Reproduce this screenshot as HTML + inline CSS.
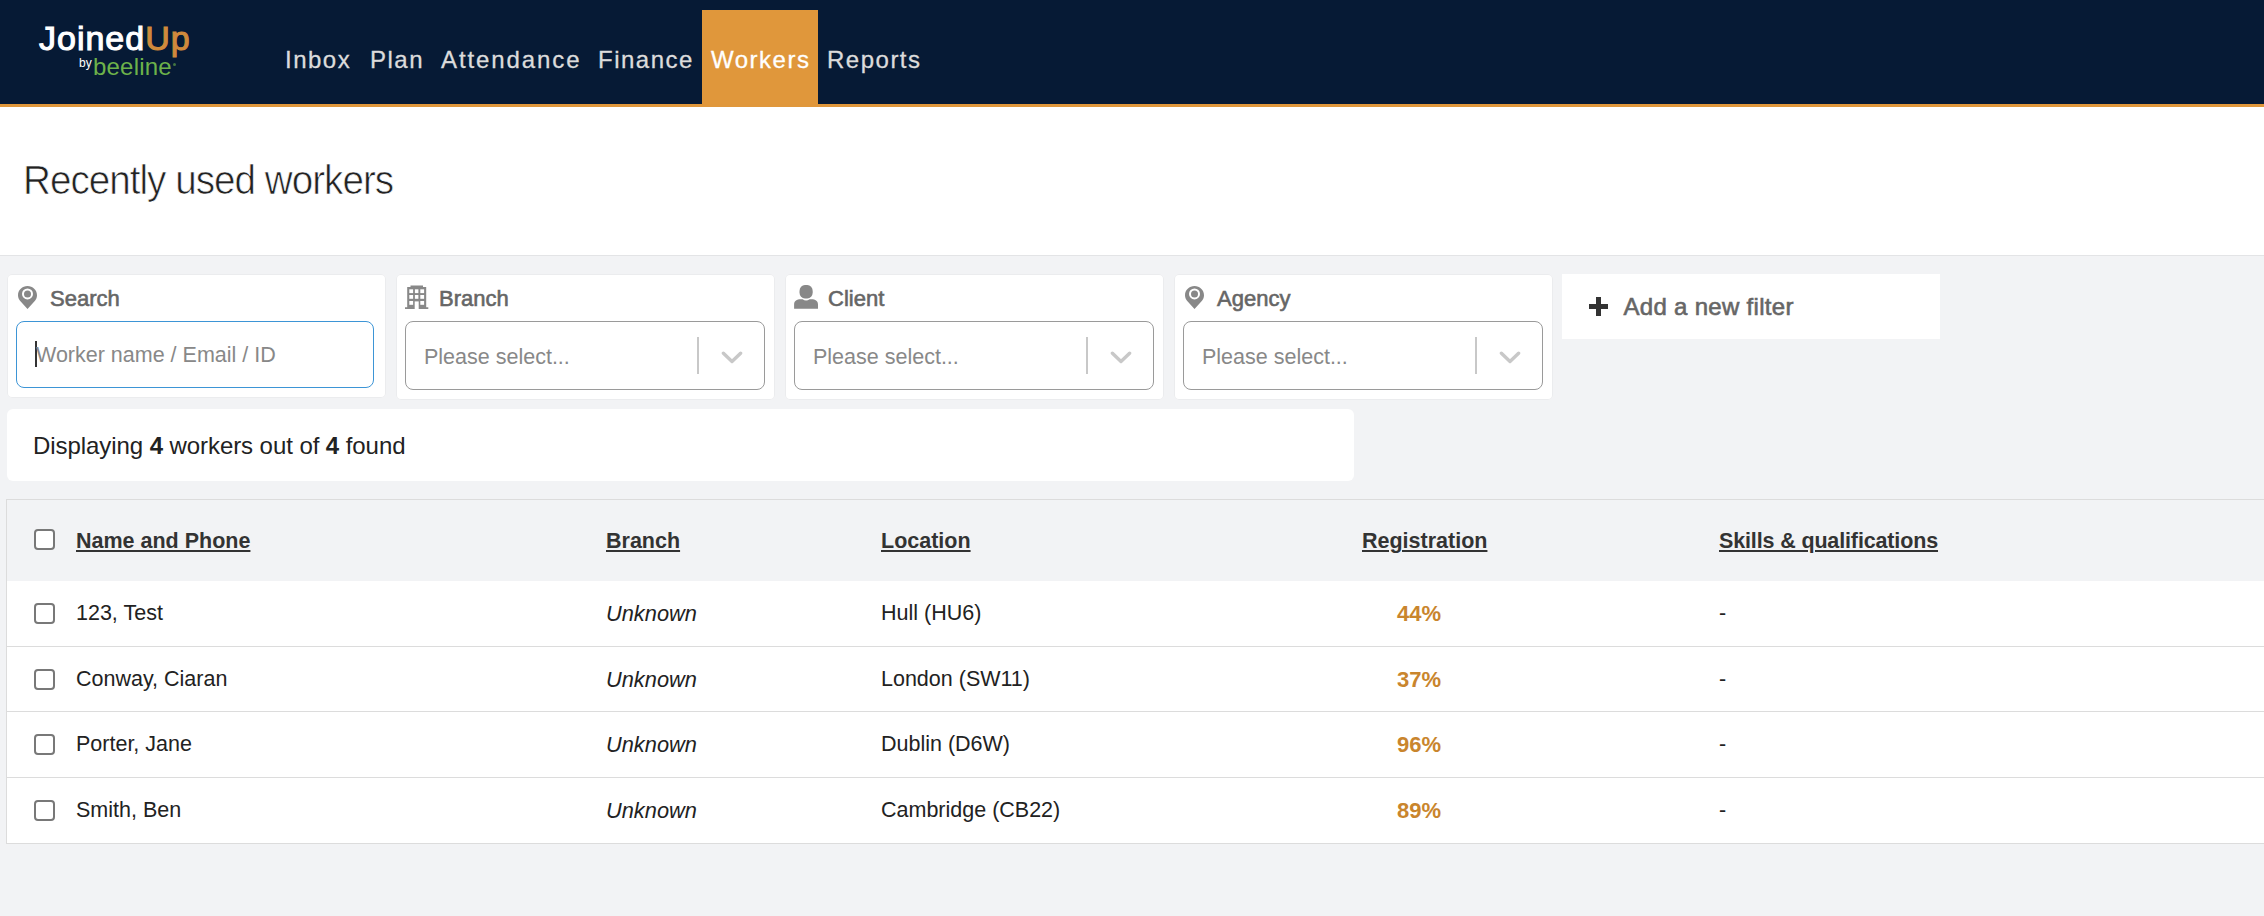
<!DOCTYPE html>
<html><head><meta charset="utf-8">
<style>
*{box-sizing:border-box;margin:0;padding:0}
html,body{width:2264px;height:916px;overflow:hidden;background:#f2f3f5;font-family:"Liberation Sans",sans-serif;}
.hdr{position:absolute;left:0;top:0;width:2264px;height:107px;background:#061a35;border-bottom:3px solid #e0973b}
.logo{position:absolute;left:38px;top:0}
.nav{position:absolute;top:10px;height:94px;font-size:24px;letter-spacing:1.5px;color:#dcdcdc;-webkit-text-stroke:0.3px #dcdcdc}
.nav span{position:absolute;top:0;height:94px;line-height:100px;white-space:nowrap}
.nav .act{background:#e0973b;color:#fff;-webkit-text-stroke:0.3px #fff}
.titlebar{position:absolute;left:0;top:107px;width:2264px;height:149px;background:#fff;border-bottom:1px solid #e3e4e6}
.title{position:absolute;left:22.5px;top:158px;font-size:40px;color:#222;white-space:nowrap;transform:scaleX(0.965);transform-origin:0 0;letter-spacing:-1px;-webkit-text-stroke:0.7px #fff}
.card{position:absolute;top:274px;height:124px;width:379px;background:#fff;border-radius:5px;box-shadow:inset 0 0 0 1px #ebecee}
.lbl{position:absolute;left:43px;top:12px;font-size:22px;color:#666;white-space:nowrap;-webkit-text-stroke:0.6px #666}
.ico{position:absolute;left:11px;top:11px}
.inp{position:absolute;left:9px;top:47px;width:358px;height:67px;border:1.5px solid #9a9a9a;border-radius:8px;background:#fff}
.inp.focus{border-color:#3d95d6}
.sc{height:125.5px}
.sc .inp{width:360px;height:68.5px;top:47px}
.sc .ph{left:18px;top:23px}
.ph{position:absolute;left:19px;top:21px;font-size:21.5px;color:#888;white-space:nowrap}
.sep{position:absolute;left:290.5px;top:14.5px;width:2px;height:37px;background:#c8c8c8}
.chev{position:absolute;left:317px;top:27px}
.addf{position:absolute;left:1562px;top:274px;width:378px;height:65px;background:#fff}
.info{position:absolute;left:7px;top:409px;width:1347px;height:72px;background:#fff;border-radius:6px}
.info p{position:absolute;left:26px;top:22.5px;font-size:24px;letter-spacing:-0.07px;color:#222;white-space:nowrap}
.tbl{position:absolute;left:6px;top:499px;width:2270px;height:345px;border:1px solid #dcdcdc;border-bottom:0;background:#fff}
.th{position:absolute;left:0;top:0;width:100%;height:81px;background:#f2f3f5}
.row{position:absolute;left:0;width:100%;height:66px;border-bottom:1px solid #dcdcdc}
.cb{position:absolute;left:27px;width:21px;height:21px;border:2px solid #787878;border-radius:4px;background:#fff}
.cell{position:absolute;font-size:21.5px;color:#222;white-space:nowrap}
.h{font-weight:bold;color:#333;text-decoration:underline;text-underline-offset:1.5px;text-decoration-thickness:2px}
.it{font-style:italic;font-size:21.8px}
.pct{font-weight:bold;color:#c9852d;font-size:22px}
</style></head><body>
<div class="hdr">
  <div class="logo">
    <div style="position:absolute;left:1px;top:19px;font-size:34px;color:#fff;letter-spacing:1px;white-space:nowrap;-webkit-text-stroke:1.1px #fff">Joined<span style="color:#d08a3c;-webkit-text-stroke:1.1px #d08a3c">Up</span></div>
    <div style="position:absolute;left:41px;top:56px;font-size:12px;color:#fff;white-space:nowrap">by</div>
    <div style="position:absolute;left:55px;top:53px;font-size:24px;color:#6db24a;white-space:nowrap;letter-spacing:0.2px">beeline</div>
    <div style="position:absolute;left:134.5px;top:62.5px;width:3px;height:3px;border-radius:50%;background:#6db24a;opacity:.6"></div>
  </div>
</div>
<div class="nav" style="left:0">
  <span style="left:276px;padding:0 9px">Inbox</span>
  <span style="left:361px;padding:0 9px">Plan</span>
  <span style="left:432px;padding:0 9px;letter-spacing:1.9px">Attendance</span>
  <span style="left:589px;padding:0 9px">Finance</span>
  <span class="act" style="left:702px;width:116px;padding:0 9px">Workers</span>
  <span style="left:818px;padding:0 9px">Reports</span>
</div>
<div class="titlebar"></div>
<div class="title">Recently used workers</div>

<div class="card" style="left:7px">
  <svg class="ico" style="left:11px;top:12px" width="19" height="23" viewBox="0 0 19 23"><path fill="#888" fill-rule="evenodd" d="M9.5 0C4.3 0 0 4 0 9.2c0 2.2.8 4 2 5.6L9.5 23l7.5-8.2c1.3-1.6 2-3.4 2-5.6C19 4 14.7 0 9.5 0zM9.5 2.4a5.5 5.5 0 1 1 0 11a5.5 5.5 0 1 1 0-11z"/><circle cx="9.5" cy="7.9" r="3.5" fill="#888"/></svg><div class="lbl">Search</div>
  <div class="inp focus"><div style="position:absolute;left:18px;top:19px;width:2px;height:26px;background:#333"></div><div class="ph">Worker name / Email / ID</div></div>
</div>
<div class="card sc" style="left:396px">
  <svg class="ico" style="left:9px;top:11px" width="24" height="25" viewBox="0 0 24 25"><path fill="#888" d="M5.5 0.5h12.5v2h-12.5z M2.2 2h19v21.3h-19z M0 22.3h23.3v1.6h-23.3z"/><g fill="#fff"><rect x="4.3" y="4.3" width="3.8" height="3.8"/><rect x="9.9" y="4.3" width="3.5" height="3.8"/><rect x="15.3" y="4.3" width="3.8" height="3.8"/><rect x="4.3" y="10" width="3.8" height="3.8"/><rect x="9.9" y="10" width="3.5" height="3.8"/><rect x="15.3" y="10" width="3.8" height="3.8"/><rect x="4.3" y="16" width="3.8" height="3.8"/><rect x="15.3" y="16" width="3.8" height="3.8"/><rect x="9.7" y="16.4" width="4" height="8"/></g></svg><div class="lbl">Branch</div>
  <div class="inp"><div class="ph">Please select...</div><div class="sep"></div><svg class="chev" style="left:315px;top:26.5px" width="22" height="16" viewBox="0 0 22 16"><path d="M2.4 4.2L11 12.4L19.6 4.2" fill="none" stroke="#c8c8c8" stroke-width="3.4" stroke-linecap="round" stroke-linejoin="round"/></svg></div>
</div>
<div class="card sc" style="left:785px">
  <svg class="ico" style="left:9px;top:10px" width="25" height="25" viewBox="0 0 25 25"><rect x="5.5" y="1.1" width="13.2" height="13.4" rx="5.4" ry="6" fill="#888"/><path fill="#888" d="M0.1 24.8V20.5C0.1 16.6 3 15.2 6.5 15.2H8.6C10.8 16.8 13.4 16.8 15.6 15.2H17.6C21.1 15.2 24 16.6 24 20.5V24.8Z"/></svg><div class="lbl">Client</div>
  <div class="inp"><div class="ph">Please select...</div><div class="sep"></div><svg class="chev" style="left:315px;top:26.5px" width="22" height="16" viewBox="0 0 22 16"><path d="M2.4 4.2L11 12.4L19.6 4.2" fill="none" stroke="#c8c8c8" stroke-width="3.4" stroke-linecap="round" stroke-linejoin="round"/></svg></div>
</div>
<div class="card sc" style="left:1174px">
  <svg class="ico" style="left:11px;top:12px" width="19" height="23" viewBox="0 0 19 23"><path fill="#888" fill-rule="evenodd" d="M9.5 0C4.3 0 0 4 0 9.2c0 2.2.8 4 2 5.6L9.5 23l7.5-8.2c1.3-1.6 2-3.4 2-5.6C19 4 14.7 0 9.5 0zM9.5 2.4a5.5 5.5 0 1 1 0 11a5.5 5.5 0 1 1 0-11z"/><circle cx="9.5" cy="7.9" r="3.5" fill="#888"/></svg><div class="lbl">Agency</div>
  <div class="inp"><div class="ph">Please select...</div><div class="sep"></div><svg class="chev" style="left:315px;top:26.5px" width="22" height="16" viewBox="0 0 22 16"><path d="M2.4 4.2L11 12.4L19.6 4.2" fill="none" stroke="#c8c8c8" stroke-width="3.4" stroke-linecap="round" stroke-linejoin="round"/></svg></div>
</div>
<div class="addf">
  <div style="position:absolute;left:34px;top:23px;width:5px;height:19px;background:#333"></div>
  <div style="position:absolute;left:27px;top:30px;width:19px;height:5px;background:#333"></div>
  <div style="position:absolute;left:61.5px;top:19px;font-size:24px;letter-spacing:0.3px;color:#666;white-space:nowrap;-webkit-text-stroke:0.6px #666">Add a new filter</div>
</div>

<div class="info"><p>Displaying <b>4</b> workers out of <b>4</b> found</p></div>

<div class="tbl">
  <div class="th">
    <div class="cb" style="top:29px"></div>
    <div class="cell h" style="left:69px;top:29px">Name and Phone</div>
    <div class="cell h" style="left:599px;top:29px">Branch</div>
    <div class="cell h" style="left:874px;top:29px">Location</div>
    <div class="cell h" style="left:1355px;top:29px">Registration</div>
    <div class="cell h" style="left:1712px;top:29px;letter-spacing:-0.14px">Skills &amp; qualifications</div>
  </div>
  <div class="row" style="top:81px;height:66px">
    <div class="cb" style="top:21.5px"></div>
    <div class="cell" style="left:69px;top:19.5px">123, Test</div>
    <div class="cell it" style="left:599px;top:19.5px">Unknown</div>
    <div class="cell" style="left:874px;top:19.5px">Hull (HU6)</div>
    <div class="cell pct" style="left:1390px;top:19.5px">44%</div>
    <div class="cell" style="left:1712px;top:19.5px">-</div>
  </div>
  <div class="row" style="top:147px;height:65px">
    <div class="cb" style="top:21.5px"></div>
    <div class="cell" style="left:69px;top:19.5px">Conway, Ciaran</div>
    <div class="cell it" style="left:599px;top:19.5px">Unknown</div>
    <div class="cell" style="left:874px;top:19.5px">London (SW11)</div>
    <div class="cell pct" style="left:1390px;top:19.5px">37%</div>
    <div class="cell" style="left:1712px;top:19.5px">-</div>
  </div>
  <div class="row" style="top:212px;height:66px">
    <div class="cb" style="top:21.5px"></div>
    <div class="cell" style="left:69px;top:19.5px">Porter, Jane</div>
    <div class="cell it" style="left:599px;top:19.5px">Unknown</div>
    <div class="cell" style="left:874px;top:19.5px">Dublin (D6W)</div>
    <div class="cell pct" style="left:1390px;top:19.5px">96%</div>
    <div class="cell" style="left:1712px;top:19.5px">-</div>
  </div>
  <div class="row" style="top:278px;height:66px">
    <div class="cb" style="top:21.5px"></div>
    <div class="cell" style="left:69px;top:19.5px">Smith, Ben</div>
    <div class="cell it" style="left:599px;top:19.5px">Unknown</div>
    <div class="cell" style="left:874px;top:19.5px">Cambridge (CB22)</div>
    <div class="cell pct" style="left:1390px;top:19.5px">89%</div>
    <div class="cell" style="left:1712px;top:19.5px">-</div>
  </div>
</div>
</body></html>
